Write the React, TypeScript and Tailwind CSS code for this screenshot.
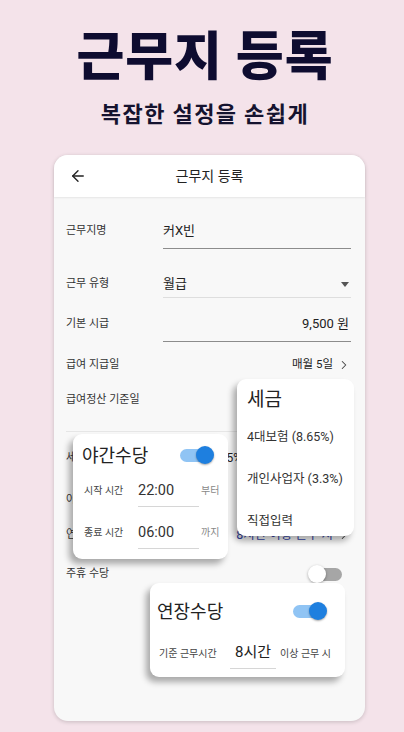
import React from "react";
import { ArrowLeft, ChevronRight } from "lucide-react";

const F = { fontFamily: 'Roboto, "Noto Sans CJK KR", sans-serif' };

function ToggleOn() {
  return (
    <div className="relative w-[34px] h-[18px] flex items-center">
      <div className="w-[32px] h-[13px] rounded-full bg-[#90c4f4]" />
      <div className="absolute right-0 top-0 w-[18px] h-[18px] rounded-full bg-[#1e7fdf] shadow-[0_1px_2px_rgba(0,0,0,0.35)]" />
    </div>
  );
}

function ToggleOff() {
  return (
    <div className="relative w-[34px] h-[18px] flex items-center">
      <div className="w-[32px] h-[13px] ml-[2px] rounded-full bg-[#a6a6a6]" />
      <div className="absolute left-0 top-0 w-[18px] h-[18px] rounded-full bg-white shadow-[0_1px_3px_rgba(0,0,0,0.35)]" />
    </div>
  );
}

export default function App() {
  return (
    <div className="w-[404px] h-[732px] bg-[#f4e3ea] flex flex-col items-center overflow-hidden" style={F}>
      <div className="mt-[20px] ml-[6px] h-[66px] flex items-center text-[52px] font-black text-[#0e0c30] leading-none tracking-[1px]" style={{ fontFamily: '"Noto Sans CJK KR", sans-serif' }}>
        근무지 등록
      </div>
      <div className="mt-[12px] ml-[6px] h-[28px] flex items-center text-[22px] font-bold text-[#15132f] leading-none tracking-[1.5px]" style={{ fontFamily: '"Noto Sans CJK KR", sans-serif' }}>
        복잡한 설정을 손쉽게
      </div>

      <div className="relative self-start ml-[54px] mt-[29px] w-[311px] h-[566px] rounded-[14px] bg-[#f8f8f8] shadow-[0_1px_4px_rgba(0,0,0,0.18)] overflow-visible">
        {/* header */}
        <div className="h-[42px] rounded-t-[14px] bg-white flex items-center relative shadow-[0_1px_2px_rgba(0,0,0,0.08)]">
          <ArrowLeft className="absolute left-[15px] top-[12px] text-[#222]" size={18} strokeWidth={1.8} />
          <div className="w-full text-center text-[14px] text-[#222]">근무지 등록</div>
        </div>

        {/* body */}
        <div className="pl-3 pr-[14px] pt-[16px] flex flex-col text-[11px] text-[#333]">
          <div className="h-[36px] flex items-center">
            <div className="w-[97px]">근무지명</div>
            <div className="flex-1 h-full flex items-center border-b border-[#8c8c8c] text-[13px] text-[#222]">커X빈</div>
          </div>
          <div className="mt-[22px] h-[27px] flex items-center">
            <div className="w-[97px]">근무 유형</div>
            <div className="flex-1 h-full flex items-center justify-between border-b border-[#dedede] text-[13px] text-[#222]">
              <span>월급</span>
              <span className="mr-[2px] w-0 h-0 border-l-[4.5px] border-r-[4.5px] border-t-[5px] border-l-transparent border-r-transparent border-t-[#555]" />
            </div>
          </div>
          <div className="mt-[8px] h-[36px] flex items-center">
            <div className="w-[97px]">기본 시급</div>
            <div className="flex-1 h-full flex items-center justify-end border-b border-[#8c8c8c] text-[13px] text-[#222] pr-[2px]">9,500 원</div>
          </div>
          <div className="mt-[8px] h-[30px] flex items-center justify-between">
            <div>급여 지급일</div>
            <div className="flex items-center text-[11.5px] text-[#222] gap-[4px]">
              <span>매월 5일</span>
              <ChevronRight size={14} strokeWidth={1.8} className="text-[#444]" />
            </div>
          </div>
          <div className="mt-[5px] h-[30px] flex items-center">
            <div>급여정산 기준일</div>
          </div>
          <div className="mt-[16px] h-px bg-[#e6e6e6]" />
          <div className="mt-[6px] h-[40px] flex items-center">
            <div className="w-[97px]">세금</div>
            <div className="text-[12px] text-[#222]">4대보험 (8.65%)</div>
          </div>
          <div className="mt-[2px] h-[40px] flex items-center">
            <div>야간 수당</div>
          </div>
          <div className="h-[30px] flex items-center justify-between">
            <div>연장 수당</div>
            <div className="flex items-center text-[12.5px] text-[#3344a8] gap-[4px]">
              <span>8시간 이상 근무 시</span>
              <ChevronRight size={14} strokeWidth={1.8} className="text-[#444]" />
            </div>
          </div>
          <div className="mt-[9px] h-[30px] flex items-center justify-between">
            <div>주휴 수당</div>
            <div className="mr-[9px]"><ToggleOff /></div>
          </div>
        </div>

        {/* 세금 popup */}
        <div className="absolute left-[183px] top-[224px] w-[117px] h-[157px] rounded-[9px] bg-white shadow-[-4px_5px_6px_rgba(0,0,0,0.32)] flex flex-col pl-[10px]">
          <div className="mt-[10px] h-[22px] flex items-center text-[19px] text-[#222]">세금</div>
          <div className="mt-[19px] h-[14px] flex items-center text-[12.5px] text-[#333]">4대보험 (8.65%)</div>
          <div className="mt-[28px] h-[14px] flex items-center text-[12.5px] text-[#333]">개인사업자 (3.3%)</div>
          <div className="mt-[28px] h-[14px] flex items-center text-[12.5px] text-[#333]">직접입력</div>
        </div>

        {/* 야간수당 popup */}
        <div className="absolute left-[19px] top-[279px] w-[155px] h-[125px] rounded-[9px] bg-white shadow-[-4px_5px_6px_rgba(0,0,0,0.32)] flex flex-col">
          <div className="mt-[10px] h-[22px] pl-[9px] pr-[14px] flex items-center justify-between">
            <span className="text-[18px] text-[#222]">야간수당</span>
            <ToggleOn />
          </div>
          <div className="mt-[10px] h-[31px] flex items-end pl-[11px]">
            <span className="w-[54px] text-[10px] text-[#444] pb-[9px]">시작 시간</span>
            <span className="w-[61px] h-full flex items-center border-b border-[#d6d6d6] text-[14.5px] text-[#333]">22:00</span>
            <span className="ml-[2px] text-[10px] text-[#888] pb-[9px]">부터</span>
          </div>
          <div className="mt-[11px] h-[31px] flex items-end pl-[11px]">
            <span className="w-[54px] text-[10px] text-[#444] pb-[9px]">종료 시간</span>
            <span className="w-[61px] h-full flex items-center border-b border-[#d6d6d6] text-[14.5px] text-[#333]">06:00</span>
            <span className="ml-[2px] text-[10px] text-[#888] pb-[9px]">까지</span>
          </div>
        </div>

        {/* 연장수당 popup */}
        <div className="absolute left-[96px] top-[428px] w-[195px] h-[94px] rounded-[9px] bg-white shadow-[-4px_5px_6px_rgba(0,0,0,0.32)] flex flex-col">
          <div className="mt-[17px] h-[22px] pl-[7px] pr-[18px] flex items-center justify-between">
            <span className="text-[18px] text-[#222]">연장수당</span>
            <ToggleOn />
          </div>
          <div className="mt-[15px] h-[32px] flex items-center pl-[9px]">
            <span className="w-[71px] text-[10px] text-[#444]">기준 근무시간</span>
            <span className="w-[46px] h-full flex items-center justify-center border-b border-[#d6d6d6] text-[15px] text-[#222]">8시간</span>
            <span className="ml-[4px] text-[10px] text-[#444]">이상 근무 시</span>
          </div>
        </div>
      </div>
    </div>
  );
}
